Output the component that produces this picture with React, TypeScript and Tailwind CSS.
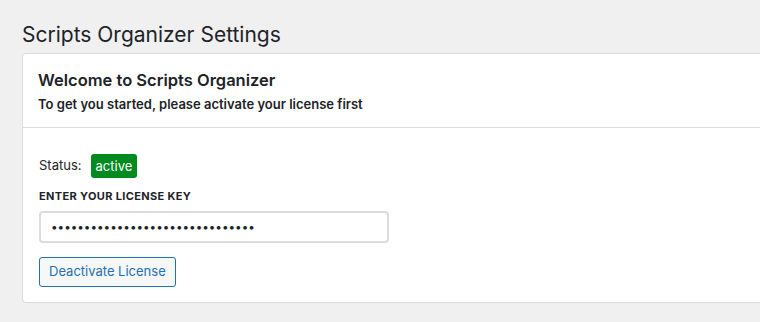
import React from 'react';

export default function App() {
  const licenseKey = 'x'.repeat(31);

  return (
    <div className="w-[760px] h-[322px] overflow-hidden bg-[#f0f0f1] text-[#1d2327] font-['Inter','Liberation_Sans',sans-serif]">
      <div className="pl-[22px] pt-[21px]">
        <h1 className="text-[21px] leading-[28px] font-normal">Scripts Organizer Settings</h1>

        <div className="mt-[4px] w-[760px] bg-white border border-[#dcdcde] rounded-[4px]">
          <div className="px-[15px] pt-[14px] pb-[14px] border-b border-[#dcdcde]">
            <h2 className="text-[16.5px] leading-[24px] font-semibold">Welcome to Scripts Organizer</h2>
            <p className="mt-[3px] text-[13px] leading-[18px] font-semibold">To get you started, please activate your license first</p>
          </div>

          <div className="px-[16px] pt-[26px] pb-[15px]">
            <div className="flex items-center gap-[9px]">
              <span className="text-[13px]">Status:</span>
              <span className="bg-[#008a20] text-white text-[13px] leading-[24px] px-[5px] rounded-[3px]">active</span>
            </div>

            <label className="block mt-[11px] text-[11px] leading-[14px] font-bold uppercase tracking-[0.35px]">
              Enter your license key
            </label>

            <input
              type="password"
              readOnly
              value={licenseKey}
              className="mt-[8px] block w-[350px] h-[32px] px-[10px] text-[11.7px] border-2 border-[#dcdcde] rounded-[4px] bg-white outline-none"
            />

            <button className="mt-[14px] h-[30px] px-[9px] text-[13px] text-[#2271b1] bg-[#f6f7f7] border border-[#2271b1] rounded-[3px]">
              Deactivate License
            </button>
          </div>
        </div>
      </div>
    </div>
  );
}
